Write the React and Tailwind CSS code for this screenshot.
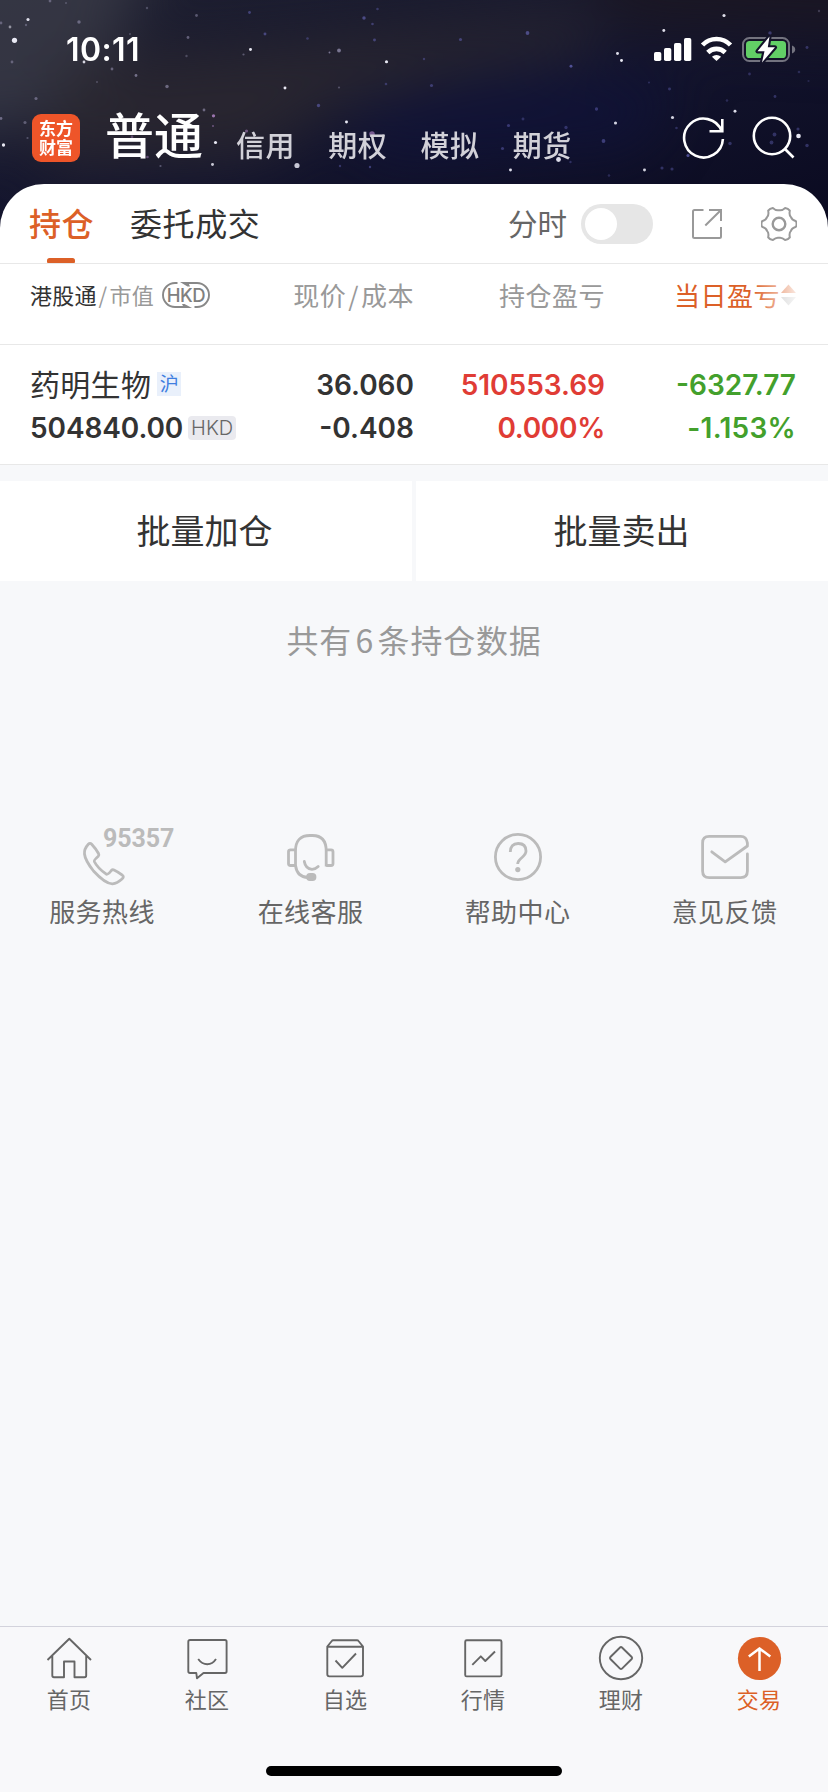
const CJK = 'font-["Noto_Sans_CJK_SC",sans-serif]';
const NUM = 'font-["Inter","Noto_Sans_CJK_SC",sans-serif]';

/* x, y, radius, opacity, colour index */
const STARS = [
  [14.5, 40.3, 3, 0.95, 0], [28, 19.5, 1.8, 0.9, 0], [10, 27, 1.6, 0.5, 0], [26, 25, 1.4, 0.35, 1], [1, 23, 1.6, 0.4, 1],
  [79, 22, 2, 0.45, 1], [50, 1, 1.6, 0.4, 1], [66, 3, 1.2, 0.3, 1], [12, 62, 1.6, 0.4, 1], [84, 62, 1.6, 0.85, 0],
  [112, 69, 1.6, 0.45, 1], [136, 75.5, 1.6, 0.55, 1], [97, 82, 1.2, 0.3, 1], [167, 86.5, 2, 0.5, 1], [36, 98.5, 1.8, 0.45, 1],
  [188, 37.5, 1.6, 0.45, 1], [196.5, 15.5, 1.6, 0.4, 1], [186.5, 56, 1.4, 0.3, 1], [147, 8, 1.4, 0.3, 1], [130, 34, 1.2, 0.3, 1],
  [250.5, 49.5, 1.7, 0.95, 0], [243.5, 54.5, 1.3, 0.4, 1], [249.5, 12.5, 1.6, 0.5, 2], [265, 34, 1.7, 0.55, 2],
  [285, 88, 1.7, 0.95, 0], [307.5, 38.5, 1.5, 0.4, 2], [318.5, 105.5, 1.9, 0.55, 2], [339, 50.5, 2.2, 0.6, 1], [329.5, 52.5, 1.1, 0.6, 1],
  [364, 18, 2, 0.6, 2], [372.5, 24, 1.5, 0.45, 2], [377.5, 9, 1.5, 0.4, 2], [374.5, 40, 1.7, 0.5, 2], [386.5, 61.8, 1.8, 0.95, 0],
  [339, 87.5, 1.3, 0.35, 1], [386, 84, 1.5, 0.4, 2], [346.5, 122, 1.7, 0.95, 0], [372, 134, 3.2, 0.6, 3],
  [297, 165.5, 3, 0.8, 0], [340, 166, 1.4, 0.4, 2], [370, 167, 1.4, 0.5, 2], [204, 110, 1.6, 0.5, 1], [213.5, 115.8, 1.9, 0.8, 3],
  [213, 126, 1.3, 0.45, 3], [215.5, 142.5, 1.8, 0.95, 0], [212.5, 164.5, 1.7, 0.8, 0], [246.5, 131, 1.8, 0.5, 3], [160.5, 166, 1.3, 0.4, 1],
  [147.5, 157, 1.5, 0.45, 3], [132, 137, 1.6, 0.4, 3], [3.5, 145, 1.9, 0.95, 0], [1, 118.5, 1.6, 0.5, 1], [25, 122.5, 1.8, 0.4, 1],
  [27.5, 138, 1.3, 0.35, 1], [527.5, 33, 2.2, 0.6, 2], [460.5, 39.5, 1.8, 0.5, 2], [424, 59, 1.4, 0.4, 2], [431.5, 85.5, 1.8, 0.45, 2],
  [571, 66.3, 1.7, 0.7, 2], [617.5, 53.5, 1.7, 0.9, 0], [621.5, 60.5, 1.7, 0.95, 0], [663.8, 30.5, 1.7, 0.9, 0],
  [724, 15.5, 1.8, 0.9, 0], [770, 33, 2, 0.45, 2], [819, 11, 1.4, 0.25, 1], [807, 47.5, 1.7, 0.4, 2], [749.5, 74, 1.6, 0.35, 2],
  [799, 72, 1.5, 0.3, 2], [775, 96.5, 1.6, 0.4, 2], [649, 82.5, 1.3, 0.3, 2], [669.5, 89, 1.7, 0.4, 2], [596.5, 109, 1.9, 0.45, 2],
  [615.5, 123, 1.8, 0.85, 0], [523, 119, 1.7, 0.35, 2], [508.5, 125.5, 1.8, 0.45, 2], [502.5, 148.5, 1.8, 0.45, 2],
  [566, 127.5, 1.9, 0.4, 2], [603.5, 141, 2.2, 0.5, 2], [558.5, 159.5, 2.8, 0.9, 0], [570.5, 162, 1.4, 0.35, 2], [510.5, 170, 1.7, 0.9, 0], [644.5, 170, 1.7, 0.85, 0],
  [672.5, 117.5, 1.8, 0.85, 0], [676.5, 128, 1.5, 0.35, 2], [735, 111.3, 1.7, 0.9, 0], [688, 155.5, 1.8, 0.7, 2], [730, 143.5, 2, 0.4, 2],
  [798.5, 136, 2.7, 0.95, 0], [798, 129, 1.8, 0.4, 2], [807, 145.5, 2, 0.4, 2], [774.5, 134.5, 2.2, 0.4, 2], [771.5, 142.5, 2.2, 0.4, 2],
  [662, 168, 1.8, 0.4, 2], [672, 169, 1.8, 0.4, 2], [609, 175.5, 1.5, 0.3, 2], [808.5, 81, 1.3, 0.25, 2], [727, 100.5, 1.5, 0.3, 2],
];
const STAR_COLORS = ["#f4f4ff", "#b3aed2", "#6a69c0", "#b98ad0"];

function Stars() {
  return (
    <svg className="absolute inset-0" width="828" height="226" viewBox="0 0 828 226">
      <defs>
        <filter id="soft" filterUnits="userSpaceOnUse" x="-20" y="-20" width="868" height="266">
          <feGaussianBlur stdDeviation="0.65" />
        </filter>
        <filter id="mist" filterUnits="userSpaceOnUse" x="-200" y="-200" width="1228" height="626" colorInterpolationFilters="sRGB">
          <feGaussianBlur stdDeviation="28" />
        </filter>
      </defs>
      <g filter="url(#mist)">
        <polygon points="-90,-90 170,-90 90,110 -90,150" fill="#3c3d4a" opacity="0.75" />
        <polygon points="60,60 300,40 600,10 590,50 430,80 330,110 260,160 40,170" fill="#2b2830" opacity="0.85" />
        <polygon points="560,-90 900,-90 900,40 620,30" fill="#1b1620" opacity="0.8" />
        <polygon points="340,110 520,75 680,80 640,150 380,165" fill="#10123a" opacity="0.7" />
      </g>
      <g filter="url(#soft)">
        {STARS.map(([x, y, r, o, c], i) => (
          <circle key={i} cx={x} cy={y} r={r * 0.86} opacity={o} fill={STAR_COLORS[c]} />
        ))}
      </g>
    </svg>
  );
}

function StatusBar() {
  return (
    <div className={`relative flex h-[92px] items-start justify-between pl-[66px] pr-[32px] text-white ${NUM}`}>
      <span className="mt-[30px] text-[32px] leading-[40px] font-semibold tracking-[0.4px]">10:11</span>
      <svg className="mt-[34px]" width="144" height="32" viewBox="651 34 144 32">
        <g fill="#fff">
          <rect x="653" y="52" width="7.3" height="9" rx="1.8" />
          <rect x="663" y="48" width="7.3" height="13" rx="1.8" />
          <rect x="673" y="43" width="7.3" height="18" rx="1.8" />
          <rect x="683" y="38" width="7.3" height="23" rx="1.8" />
        </g>
        <g fill="none" stroke="#fff" strokeWidth="4.6">
          <path d="M701.5 45 A19.5 19.5 0 0 1 729.5 45" />
          <path d="M706.8 52.5 A12.3 12.3 0 0 1 724.2 52.5" />
        </g>
        <path d="M715.5 61 l-4.6 -4.3 a7 7 0 0 1 9.2 0 z" fill="#fff" />
        <rect x="742" y="38" width="46" height="23" rx="6.5" fill="none" stroke="#73737f" strokeWidth="2" />
        <path d="M791 45.5 q3.2 1.2 3.2 4 t-3.2 4 z" fill="#73737f" />
        <rect x="745" y="41" width="40" height="17" rx="3.6" fill="#62cf66" />
        <path d="M768.5 36.5 L756.5 51.3 H763.5 L761 62.5 L774 47.3 H766.8 Z" fill="#fff" stroke="#14132a" strokeWidth="4.2" strokeLinejoin="round" />
        <path d="M768.5 36.5 L756.5 51.3 H763.5 L761 62.5 L774 47.3 H766.8 Z" fill="#fff" />
      </svg>
    </div>
  );
}

function AccountBar() {
  return (
    <div className={`relative flex h-[92px] items-center pl-[32px] pr-[31px] ${CJK}`}>
      <div className="flex size-[48px] items-center justify-center rounded-[9px] bg-[#ee5529] text-center text-[17px] leading-[19px] font-bold text-white">
        <p className="-mt-[2px] w-[34px] break-all">东方财富</p>
      </div>
      <span className="-mt-[10px] ml-[25px] text-[49px] leading-[60px] font-medium text-white">普通</span>
      <div className="mt-[12px] ml-[33px] flex gap-[33px] text-[29px] leading-[40px] font-medium tracking-[0.6px] text-[#d2d1d8]">
        <span>信用</span>
        <span>期权</span>
        <span>模拟</span>
        <span>期货</span>
      </div>
      <svg className="ml-auto" width="116" height="44" viewBox="680 116 116 44" fill="none" stroke="#fff" strokeWidth="2.6">
        <path d="M721.9 139 A19.4 19.4 0 1 1 720.6 131" />
        <path d="M721.3 119 V131.3 H708.5" />
        <circle cx="771" cy="136" r="18.2" />
        <path d="M784 149 L792.5 157.5" />
      </svg>
    </div>
  );
}

function gearPath() {
  const pt = (r, deg) => {
    const a = (deg * Math.PI) / 180;
    return `${(18 + r * Math.cos(a)).toFixed(2)} ${(18 + r * Math.sin(a)).toFixed(2)}`;
  };
  let d = `M${pt(17.2, -9)}`;
  for (let a = 0; a < 360; a += 60) {
    d += ` Q${pt(18.2, a)} ${pt(17.2, a + 9)} C${pt(14, a + 16)} ${pt(13.4, a + 22)} ${pt(13.8, a + 30)} C${pt(13.4, a + 38)} ${pt(14, a + 44)} ${pt(17.2, a + 51)}`;
  }
  return d + " Z";
}

function Tabs() {
  return (
    <div className={`flex h-[80px] items-start border-b border-[#e8e8e8] pl-[29px] pr-[31px] text-[32px] leading-[44px] ${CJK}`}>
      <div className="flex h-full w-[65px] flex-col items-start justify-between">
        <span className="mt-[16px] font-medium tracking-[0.6px] whitespace-nowrap text-[#dc6027]">持仓</span>
        <span className="ml-[18px] h-[5px] w-[28px] rounded-t-[2.5px] rounded-b-[1px] bg-[#dc6027]" />
      </div>
      <span className="mt-[16px] ml-[36px] tracking-[0.6px] text-[#333]">委托成交</span>
      <span className="mt-[16px] ml-auto text-[29.5px] text-[#666]">分时</span>
      <div className="mt-[20px] ml-[14px] flex h-[40px] w-[72px] items-center rounded-full bg-[#e6e6e6] pl-[4px]">
        <span className="size-[32px] rounded-full bg-white" />
      </div>
      <svg className="mt-[24px] ml-[38px]" width="32" height="32" viewBox="690 208 32 32" fill="none" stroke="#999" strokeWidth="2">
        <path d="M702.5 210 H693.5 Q692 210 692 211.5 V236.5 Q692 238 693.5 238 H718.5 Q720 238 720 236.5 V227" />
        <path d="M708 210 H720 V221 M720 210 L704.3 225.5" />
      </svg>
      <svg className="mt-[22px] ml-[38px]" width="36" height="36" viewBox="0 0 36 36" fill="none" stroke="#999" strokeWidth="2" strokeLinejoin="round">
        <path d={gearPath()} />
        <circle cx="18" cy="18" r="6.3" strokeWidth="2.4" />
      </svg>
    </div>
  );
}

function CurrencySwitch() {
  return (
    <span className="relative mt-[2px] ml-[8px] flex h-[26px] w-[48px] items-center justify-center">
      <svg className="absolute inset-0" width="48" height="26" viewBox="0 0 48 26" fill="none" stroke="#888" strokeWidth="1.9">
        <path d="M15.5 1 H13 A12 12 0 0 0 13 25 H25" />
        <path d="M32.5 25 H35 A12 12 0 0 0 35 1 H23" />
        <path d="M18 0.1 H26 L28 4.6 L25.5 4.6 Z M30 25.9 H22 L20 21.9 L22.5 21.9 Z" fill="#888" stroke="none" />
      </svg>
      <span className={`relative text-[18.5px] leading-[26px] font-medium tracking-[-0.5px] text-[#808080] ${NUM}`}>HKD</span>
    </span>
  );
}

function TableHead() {
  return (
    <div className={`grid h-[81px] grid-cols-[193px_191px_191px_191px] items-start border-b border-[#e8e8e8] pl-[30px] pt-[12px] text-[26px] leading-[38px] tracking-[0.5px] text-[#999] ${CJK}`}>
      <div className="-mt-[1px] flex items-center text-[22px] tracking-[0.2px] whitespace-nowrap">
        <span className="text-[#333]">港股通</span>
        <span className="px-[2px]">/</span>
        <span>市值</span>
        <CurrencySwitch />
      </div>
      <div className="text-right">
        现价<span className="px-[2px]">/</span>成本
      </div>
      <div className="text-right">持仓盈亏</div>
      <div className="relative flex items-center justify-end gap-[1px] text-[#dc6027]">
        <span>当日盈亏</span>
        <svg width="15" height="22" viewBox="0 0 15 22">
          <path d="M7.5 0.5 L15 9 H0 Z" fill="#dc6027" />
          <path d="M7.5 21.5 L15 13 H0 Z" fill="#bbb" />
        </svg>
        <span className="absolute top-0 right-0 h-[38px] w-[44px] bg-linear-to-r from-white/0 to-white/85" />
      </div>
    </div>
  );
}

function HoldingRow() {
  return (
    <div className={`grid h-[120px] grid-cols-[193px_191px_191px_191px] items-start border-b border-[#e8e8e8] pl-[30px] pt-[19px] text-[28px] leading-[43px] font-semibold whitespace-nowrap ${NUM}`}>
      <div className="text-[#333]">
        <div className={`flex h-[43px] items-center font-normal ${CJK}`}>
          <span className="-mt-[4px] text-[30px] tracking-[0.3px]">药明生物</span>
          <span className="-mt-[3px] ml-[6px] h-[24px] w-[24px] shrink-0 bg-[#e9f0fb] text-center text-[19px] leading-[22px] text-[#3f7ee0]">沪</span>
        </div>
        <div className="flex h-[43px] items-center">
          <span className="tracking-[-0.1px]">504840.00</span>
          <span className="-mt-[2px] ml-[5px] h-[24px] w-[48px] shrink-0 rounded-[4px] bg-[#eaeaef] text-center font-['Inter',sans-serif] text-[20px] leading-[25px] font-light text-[#666]">HKD</span>
        </div>
      </div>
      <div className="text-right text-[#333]">
        <div>36.060</div>
        <div>-0.408</div>
      </div>
      <div className="text-right text-[#e03c35]">
        <div>510553.69</div>
        <div className="tracking-[-0.3px]">0.000%</div>
      </div>
      <div className="text-right text-[#43a02c]">
        <div>-6327.77</div>
        <div className="tracking-[0.3px]">-1.153%</div>
      </div>
    </div>
  );
}

const SERVICES = [
  {
    label: "服务热线",
    icon: (
      <path transform="translate(5.5 0)" d="M12.2 14.2 Q10.5 12.5 8.8 14.3 Q4.5 19 5 24 Q5.5 30 14 41 Q26 54 33 53.8 Q37.5 53.5 42.5 49 Q45 46.8 42.8 45.2 Q38.5 41.8 34.5 40 Q33 39.3 31.8 40.5 Q28.5 44.8 26.8 44.2 Q18 38 14.8 31.5 Q14.3 30.2 18.8 26.2 Q19.8 25 19 23.5 Q16.5 18.8 12.2 14.2 Z" />
    ),
  },
  {
    label: "在线客服",
    icon: (
      <>
        <path d="M12.5 36.5 V21 Q12.5 5.5 27 5.5 H29.5 Q43.2 5.5 43.2 21 V36.5" />
        <path d="M12.5 19.8 H7.5 Q5.5 19.8 5.5 21.8 V33.5 Q5.5 35.5 7.5 35.5 H12.5" />
        <path d="M43.2 19.8 H48 Q50 19.8 50 21.8 V33.5 Q50 35.5 48 35.5 H43.2" />
        <path d="M12.5 35.5 Q14 47 25 47.5" />
        <path d="M21.3 31.5 Q22.5 38.8 29 39.3 Q32.5 39.3 35.2 36.6" strokeLinecap="round" />
        <rect x="24.5" y="44.5" width="7.5" height="5" rx="2.5" fill="#bbb" />
      </>
    ),
  },
  {
    label: "帮助中心",
    icon: (
      <>
        <circle cx="28" cy="27" r="22.6" />
        <path d="M20.3 22 Q20.3 13.5 28.2 13.5 Q36 13.5 36 21 Q36 24 32 27.5 Q27.7 31 27.7 34" />
        <circle cx="27.8" cy="39.6" r="2.6" fill="#bbb" stroke="none" />
      </>
    ),
  },
  {
    label: "意见反馈",
    icon: (
      <path d="M50.4 24 V41 Q50.4 47.6 43.8 47.6 H12.2 Q5.6 47.6 5.6 41 V13 Q5.6 6.4 12.2 6.4 H43.8 Q49.5 6.4 50.4 13 V16 L28.2 31.8 L14.8 21.8" />
    ),
  },
];

function Services() {
  return (
    <div className={`flex pt-[168px] text-[26px] leading-[38px] tracking-[0.4px] text-[#666] ${CJK}`}>
      {SERVICES.map((s, i) => (
        <div key={s.label} className={i === 0 ? "flex w-[207px] shrink-0 flex-col items-center pr-[3px]" : "flex w-[207px] shrink-0 flex-col items-center"}>
          <div className="relative flex h-[60px] w-[56px]">
            <svg className="overflow-visible" width="56" height="60" viewBox="0 0 56 60" fill="none" stroke="#bbb" strokeWidth="2.8" strokeLinejoin="round" strokeLinecap={i === 3 ? "round" : "butt"}>
              {s.icon}
            </svg>
            {i === 0 && (
              <span className="absolute top-[-4px] left-[29px] font-['Roboto',sans-serif] text-[25px] leading-[26px] font-bold tracking-[-0.1px] text-[#bbb]">95357</span>
            )}
          </div>
          <span className="mt-[2px]">{s.label}</span>
        </div>
      ))}
    </div>
  );
}

const NAV = [
  {
    label: "首页",
    icon: <path d="M1.5 26 L23.3 4.8 L45 26 M6.3 22 V41.5 Q6.3 43.2 8 43.2 H18 V27.5 H28.5 V43.2 H38.5 Q40.2 43.2 40.2 41.5 V22" />,
  },
  {
    label: "社区",
    icon: (
      <path d="M19.5 39 H41 Q42.6 39 42.6 37.3 V7.7 Q42.6 6 41 6 H6 Q4.3 6 4.3 7.7 V37.3 Q4.3 39 6 39 H12.3 L13 44.3 Z M14.2 25 Q18 30.3 23.3 30.3 Q28.5 30.3 32 25" />
    ),
  },
  {
    label: "自选",
    icon: (
      <path d="M5.3 12.5 L9.8 7 Q10.3 6.2 11.3 6.2 H35 Q36 6.2 36.5 7 L41 12.5 V40.3 Q41 42.4 39 42.4 H7.3 Q5.3 42.4 5.3 40.3 Z M5.3 12.8 H41 M13.5 26.5 L20.3 33.8 L34 19.5" />
    ),
  },
  {
    label: "行情",
    icon: (
      <path d="M6.7 6.2 H40 Q41.5 6.2 41.5 7.7 V40.9 Q41.5 42.4 40 42.4 H6.7 Q5.2 42.4 5.2 40.9 V7.7 Q5.2 6.2 6.7 6.2 Z M12.3 30.8 L20.8 22.3 L25.3 27 L35 17.5" />
    ),
  },
  {
    label: "理财",
    icon: (
      <>
        <circle cx="23" cy="24" r="21.2" />
        <path d="M22 13.5 Q23 12.5 24 13.5 L33.7 23 Q34.6 24 33.7 25 L24 34.6 Q23 35.5 22 34.6 L12.4 25 Q11.5 24 12.4 23 Z" />
      </>
    ),
  },
  {
    label: "交易",
    active: true,
    icon: (
      <>
        <circle cx="23.5" cy="24.5" r="21.6" fill="#dc6027" stroke="none" />
        <path d="M23.5 15 V37 M12.8 22.6 L23.5 14.4 L34.3 22.6" stroke="#fff" strokeWidth="2.5" />
      </>
    ),
  },
];

function BottomNav() {
  return (
    <div className={`flex h-[166px] flex-col items-center justify-between border-t border-[#d3d3dc] bg-[#f8f8fa] pb-[16px] ${CJK}`}>
      <div className="grid w-full grid-cols-6 pt-[7px] text-[22px] leading-[30px] tracking-[0.3px]">
        {NAV.map((n) => (
          <div key={n.label} className={n.active ? "flex flex-col items-center text-[#dc6027]" : "flex flex-col items-center text-[#666]"}>
            <svg width="46" height="48" viewBox="0 0 46 48" className="overflow-visible" fill="none" stroke="#666" strokeWidth="1.9" strokeLinejoin="round">
              {n.icon}
            </svg>
            <span className="mt-[1px]">{n.label}</span>
          </div>
        ))}
      </div>
      <div className="h-[10px] w-[296px] rounded-full bg-black" />
    </div>
  );
}

export default function App() {
  return (
    <div className="flex h-[1792px] w-[828px] flex-col overflow-hidden bg-[#f7f8fa]">
      <div className="relative h-[184px] shrink-0">
        <div className="absolute inset-x-0 top-0 h-[228px] overflow-hidden bg-linear-to-br from-[#1f2030] via-[#14152e] to-[#0a0a20]">
          <Stars />
        </div>
        <StatusBar />
        <AccountBar />
      </div>
      <div className="relative rounded-t-[44px] bg-white">
        <Tabs />
        <TableHead />
        <HoldingRow />
      </div>
      <div className={`mt-[16px] grid h-[100px] shrink-0 grid-cols-2 gap-[4px] text-center text-[34px] leading-[98px] text-[#333] ${CJK}`}>
        <div className="bg-white pr-[3px]">批量加仓</div>
        <div className="bg-white pr-[1px]">批量卖出</div>
      </div>
      <div className={`mt-[35px] text-center text-[32px] leading-[46px] tracking-[0.8px] text-[#999] ${CJK}`}>
        共有<span className="px-[3.5px]">6</span>条持仓数据
      </div>
      <Services />
      <div className="mt-auto">
        <BottomNav />
      </div>
    </div>
  );
}
